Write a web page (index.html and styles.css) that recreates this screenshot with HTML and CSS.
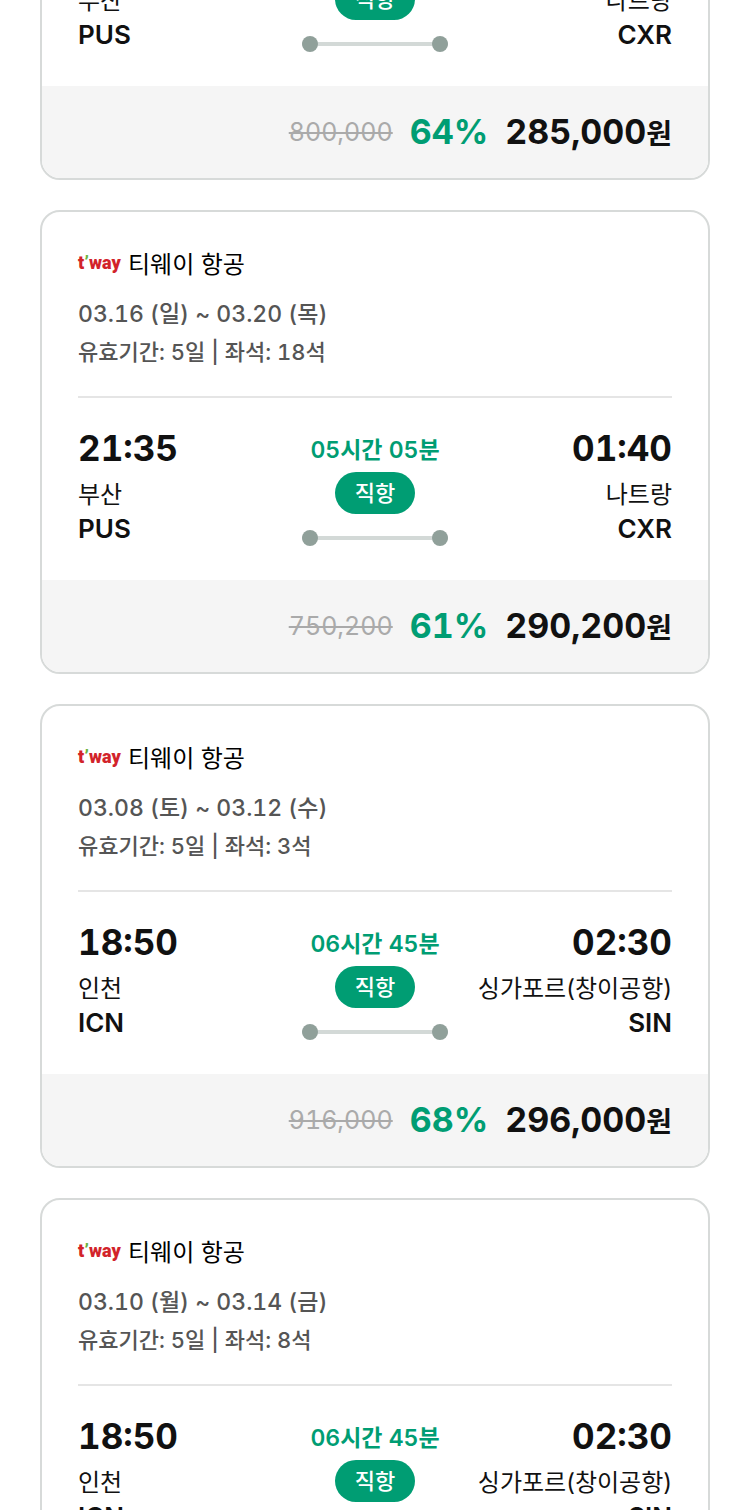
FILE: index.html
```
<!DOCTYPE html>
<html lang="ko">
	<head>
		<meta charset="utf-8">
		<meta name="viewport" content="width=device-width">
		<title>항공권 특가</title>
		<link rel="stylesheet" href="styles.css">
	</head>
	<body>
		<ul class="ticket-list">
			<li class="ticket">
				<div class="info">
					<div class="airline"><span class="logo">t<i>’</i>way</span>티웨이 항공</div>
					<p class="date">03.16 (일) ~ 03.20 (목)</p>
					<p>유효기간: 5일 | 좌석: 18석</p>
				</div>
				<div class="route">
					<div class="place">
						<strong>21:35</strong>
						<span>부산</span>
						<b>PUS</b>
					</div>
					<div class="flight">
						<span class="duration">05시간 05분</span>
						<span class="direct">직항</span>
						<span class="line"></span>
					</div>
					<div class="place arrive">
						<strong>01:40</strong>
						<span>나트랑</span>
						<b>CXR</b>
					</div>
				</div>
				<div class="price">
					<del>800,000</del>
					<span class="rate">64%</span>
					<strong>285,000<small>원</small></strong>
				</div>
			</li>
			<li class="ticket">
				<div class="info">
					<div class="airline"><span class="logo">t<i>’</i>way</span>티웨이 항공</div>
					<p class="date">03.16 (일) ~ 03.20 (목)</p>
					<p>유효기간: 5일 | 좌석: 18석</p>
				</div>
				<div class="route">
					<div class="place">
						<strong>21:35</strong>
						<span>부산</span>
						<b>PUS</b>
					</div>
					<div class="flight">
						<span class="duration">05시간 05분</span>
						<span class="direct">직항</span>
						<span class="line"></span>
					</div>
					<div class="place arrive">
						<strong>01:40</strong>
						<span>나트랑</span>
						<b>CXR</b>
					</div>
				</div>
				<div class="price">
					<del>750,200</del>
					<span class="rate">61%</span>
					<strong>290,200<small>원</small></strong>
				</div>
			</li>
			<li class="ticket">
				<div class="info">
					<div class="airline"><span class="logo">t<i>’</i>way</span>티웨이 항공</div>
					<p class="date">03.08 (토) ~ 03.12 (수)</p>
					<p>유효기간: 5일 | 좌석: 3석</p>
				</div>
				<div class="route">
					<div class="place">
						<strong>18:50</strong>
						<span>인천</span>
						<b>ICN</b>
					</div>
					<div class="flight">
						<span class="duration">06시간 45분</span>
						<span class="direct">직항</span>
						<span class="line"></span>
					</div>
					<div class="place arrive">
						<strong>02:30</strong>
						<span>싱가포르(창이공항)</span>
						<b>SIN</b>
					</div>
				</div>
				<div class="price">
					<del>916,000</del>
					<span class="rate">68%</span>
					<strong>296,000<small>원</small></strong>
				</div>
			</li>
			<li class="ticket">
				<div class="info">
					<div class="airline"><span class="logo">t<i>’</i>way</span>티웨이 항공</div>
					<p class="date">03.10 (월) ~ 03.14 (금)</p>
					<p>유효기간: 5일 | 좌석: 8석</p>
				</div>
				<div class="route">
					<div class="place">
						<strong>18:50</strong>
						<span>인천</span>
						<b>ICN</b>
					</div>
					<div class="flight">
						<span class="duration">06시간 45분</span>
						<span class="direct">직항</span>
						<span class="line"></span>
					</div>
					<div class="place arrive">
						<strong>02:30</strong>
						<span>싱가포르(창이공항)</span>
						<b>SIN</b>
					</div>
				</div>
			</li>
		</ul>
	</body>
</html>
```
FILE: styles.css
```
* {
	box-sizing: border-box;
}
body {
	margin: 0;
	height: 100vh;
	overflow: hidden;
	background: #fff;
	color: #111;
	font-family: Inter, "Noto Sans CJK KR", sans-serif;
	font-size: 24px;
	font-variant-numeric: tabular-nums;
}
/* list is scrolled part way into the first ticket */
.ticket-list {
	list-style: none;
	margin: -284px 40px 0;
	padding: 0;
	display: flex;
	flex-direction: column;
	gap: 30px;
}
.ticket {
	border: 2px solid #d7dad9;
	border-radius: 20px;
	overflow: hidden;
}
.info {
	margin: 0 36px;
	padding: 35px 0 25px;
	border-bottom: 2px solid #e5e5e5;
}
.airline {
	display: flex;
	align-items: center;
	gap: 10px;
	line-height: 36px;
	margin-bottom: 12px;
	color: #000;
}
.logo {
	width: 40px;
	font-family: "Liberation Sans Narrow", Roboto, sans-serif;
	font-size: 18px;
	font-weight: 900;
	line-height: 30px;
	padding-bottom: 4px;
	color: #d2232a;
}
.logo i {
	font-style: normal;
	color: #6cb33f;
}
.info p {
	margin: 0;
	font-size: 22px;
	font-weight: 500;
	line-height: 38px;
	color: #555;
}
.info .date {
	font-size: 23px;
}
.route {
	display: grid;
	grid-template-columns: 1fr 146px 1fr;
	padding: 30px 36px 34px;
}
.place {
	display: flex;
	flex-direction: column;
	line-height: 34px;
	white-space: nowrap;
}
.place strong {
	font-size: 35px;
	line-height: 40px;
	margin-bottom: 10px;
}
.place span {
	font-variant-numeric: normal;
}
.place b {
	font-size: 26px;
	font-weight: 600;
}
.arrive {
	align-items: flex-end;
}
.flight {
	display: flex;
	flex-direction: column;
	align-items: center;
	padding-top: 6px;
}
.duration {
	font-size: 23px;
	font-weight: 600;
	line-height: 32px;
	color: #009d73;
}
.direct {
	width: 80px;
	margin: 6px 0 16px;
	border-radius: 21px;
	background: #009d73;
	color: #fff;
	font-size: 22px;
	font-weight: 500;
	line-height: 42px;
	text-align: center;
}
.line {
	display: flex;
	align-items: center;
	justify-content: space-between;
	width: 100%;
	height: 16px;
	background: linear-gradient(#d3d9d7, #d3d9d7) center / 100% 4px no-repeat;
}
.line::before,
.line::after {
	content: "";
	width: 16px;
	height: 16px;
	border-radius: 50%;
	background: #90a09a;
}
.price {
	display: flex;
	justify-content: flex-end;
	align-items: center;
	gap: 17px;
	padding: 26px 36px;
	background: #f5f5f5;
	font-size: 34px;
	line-height: 40px;
}
.price del {
	font-size: 25px;
	color: #aaa;
}
.rate {
	font-weight: 700;
	color: #009d73;
}
.price small {
	font-size: 28px;
	line-height: 30px;
}
```
